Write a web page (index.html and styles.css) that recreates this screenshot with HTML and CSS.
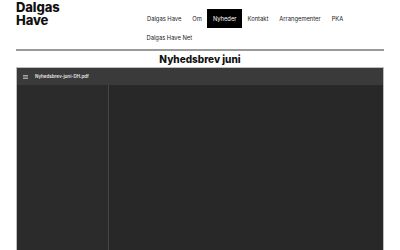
FILE: index.html
```html
<!DOCTYPE html>
<html lang="da">
<head>
    <meta charset="UTF-8">
    <meta name="viewport" content="width=device-width, initial-scale=1.0">
    <title>Dalgas Have - Nyhedsbrev juni</title>
    <link rel="stylesheet" href="styles.css">
</head>
<body>

    <!-- Header -->
    <header class="site-header">
        <a href="#" class="logo">Dalgas<br>Have</a>
        <nav class="menu">
            <a href="#">Dalgas Have</a>
            <a href="#">Om</a>
            <a href="#" class="active">Nyheder</a>
            <a href="#">Kontakt</a>
            <a href="#">Arrangementer</a>
            <a href="#">PKA</a>
            <a href="#">Dalgas Have Net</a>
        </nav>
    </header>

    <main class="content">
        <h1>Nyhedsbrev juni</h1>

        <!-- PDF visning -->
        <div class="pdf-viewer">
            <div class="pdf-toolbar">
                <span class="pdf-menu">
                    <svg width="5" height="4" viewBox="0 0 5 4"><rect y="0" width="5" height="0.8" fill="#bdbdbd"/><rect y="1.6" width="5" height="0.8" fill="#bdbdbd"/><rect y="3.2" width="5" height="0.8" fill="#bdbdbd"/></svg>
                </span>
                <span class="pdf-title">Nyhedsbrev-juni-DH.pdf</span>
            </div>
            <div class="pdf-body">
                <div class="pdf-sidebar"></div>
                <div class="pdf-page"></div>
            </div>
        </div>
    </main>

</body>
</html>
```

FILE: styles.css
```css
/* Grundlæggende */
* {
    margin: 0;
    padding: 0;
    box-sizing: border-box;
}

body {
    font-family: Inter, "Liberation Sans", sans-serif;
    color: #111;
    background-color: #fff;
}

/* Header */
.site-header {
    display: flex;
    margin: 0 16px;
    height: 51px;
    border-bottom: 2px solid #9a9a9a;
}

.logo {
    display: block;
    width: 125px;
    padding-top: 1px;
    font-size: 13px;
    font-weight: 800;
    line-height: 13px;
    letter-spacing: -0.1px;
    color: #111;
    text-decoration: none;
}

.menu {
    display: flex;
    flex-wrap: wrap;
    align-content: flex-start;
    width: 215px;
    padding-top: 9px;
}

.menu a {
    display: block;
    height: 19px;
    line-height: 19px;
    padding: 0 5.5px;
    font-size: 5.8px;
    color: #222;
    text-decoration: none;
}

.menu a:first-child {
    margin-left: 0.5px;
}

.menu a.active {
    background: #000;
    color: #fff;
}

/* Indhold */
.content {
    margin: 0 16px;
}

.content h1 {
    text-align: center;
    font-size: 10px;
    font-weight: 800;
    line-height: 16px;
    color: #111;
}

/* PDF */
.pdf-viewer {
    height: 190px;
    border: 1px solid #bdbdbd;
    border-bottom: none;
    background: #282828;
    display: flex;
    flex-direction: column;
}

.pdf-toolbar {
    display: flex;
    align-items: center;
    height: 17px;
    background: #3a3a3a;
    padding-left: 6px;
}

.pdf-menu {
    display: flex;
    width: 12px;
}

.pdf-title {
    font-size: 4.5px;
    font-weight: 600;
    color: #e8e8e8;
}

.pdf-body {
    flex: 1;
    display: flex;
}

.pdf-sidebar {
    width: 92px;
    background: #2b2b2b;
    border-right: 1px solid #454545;
}

.pdf-page {
    flex: 1;
    background: #282828;
}
```
